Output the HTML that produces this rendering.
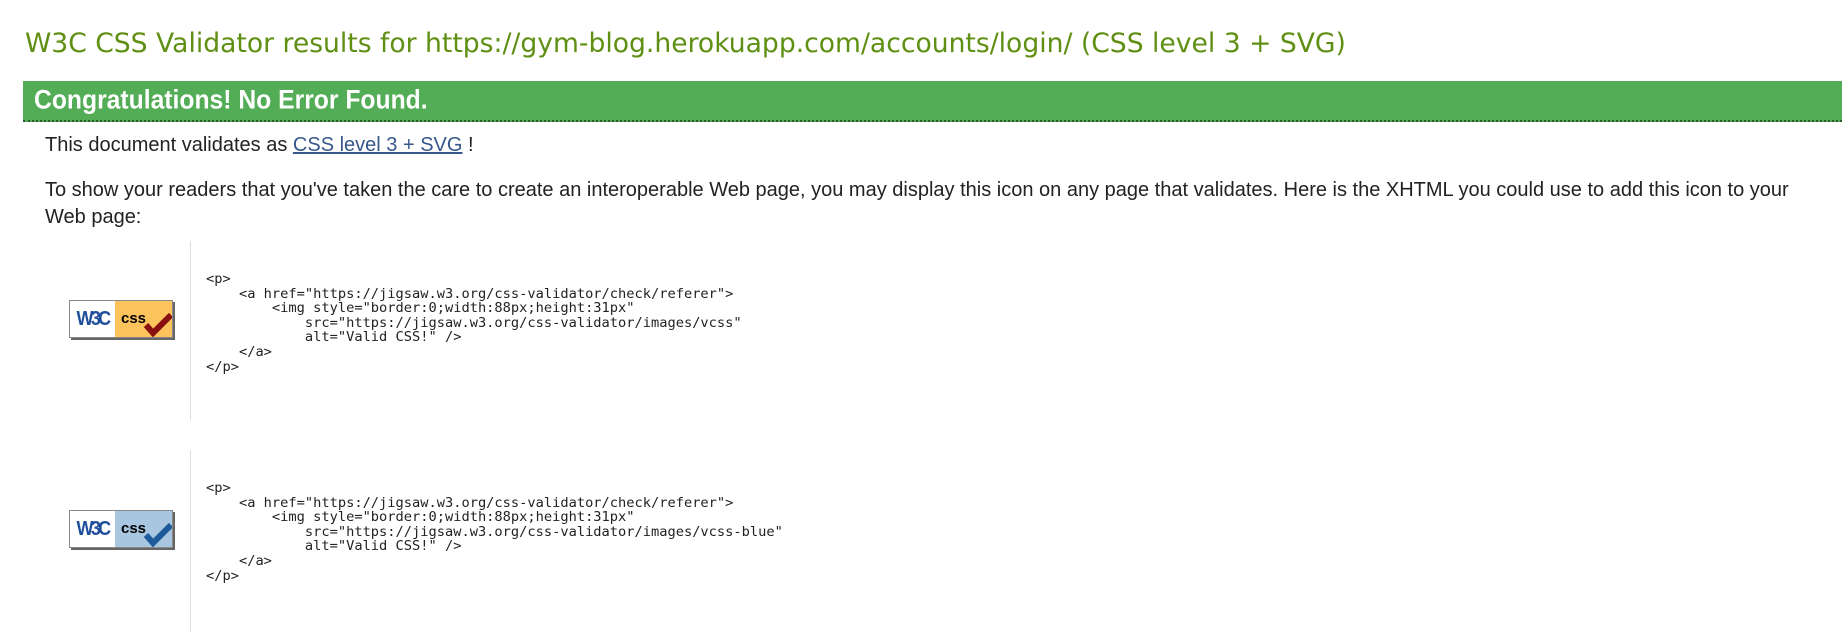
<!DOCTYPE html>
<html><head><meta charset="utf-8"><style>
body{margin:0;width:1845px;height:632px;background:#fff;position:relative;overflow:hidden;font-family:"Liberation Sans",Arial,sans-serif;}
.a{position:absolute;white-space:nowrap;}
h1{position:absolute;left:25px;top:28px;margin:0;font:normal 26.6px "DejaVu Sans",sans-serif;color:#5f8f13;white-space:nowrap;}
.bar{position:absolute;left:23px;top:81px;width:1819px;height:39px;background:#53ad56;border-bottom:2px dotted #2a5a2a;}
.bar span{position:absolute;left:11px;top:5px;color:#fff;font:bold 24.7px "Liberation Sans",Arial,sans-serif;transform:scaleY(1.08);transform-origin:top left;}
.t{font-size:20px;color:#222;}
a{color:#36578a;}
.vl{position:absolute;left:190px;width:1px;background:#ddd;}
pre{position:absolute;left:206px;margin:0;font:13.7px/14.6px "DejaVu Sans Mono",monospace;color:#222;}
.badge{position:absolute;left:69px;width:102px;height:36px;border:1px solid #888;box-shadow:2px 2px 0 #666;display:flex;overflow:hidden;}
.w3{width:45px;background:#fff;color:#1f4e9a;font:bold 20px "Liberation Sans",sans-serif;letter-spacing:-3px;display:flex;align-items:center;justify-content:center;transform:scaleX(.9);}
.cs{flex:1;position:relative;font:bold 15px "Liberation Sans",sans-serif;}
.cs span{position:absolute;left:6px;top:9px;}
</style></head><body>
<h1>W3C CSS Validator results for https://gym-blog.herokuapp.com/accounts/login/ (CSS level 3 + SVG)</h1>
<div class="bar"><span>Congratulations! No Error Found.</span></div>
<div class="a t" style="left:45px;top:134px;">This document validates as <a href="#">CSS level 3 + SVG</a> !</div>
<div class="a t" style="left:45px;top:179px;">To show your readers that you've taken the care to create an interoperable Web page, you may display this icon on any page that validates. Here is the XHTML you could use to add this icon to your</div>
<div class="a t" style="left:45px;top:206px;">Web page:</div>
<div class="vl" style="top:241px;height:179px;"></div>
<div class="vl" style="top:450px;height:182px;"></div>
<div class="badge" style="top:300px;"><div class="w3">W3C</div><div class="cs" style="background:#fdc45e;"><span>css</span><svg style="position:absolute;right:-2px;top:10px" width="30" height="26" viewBox="0 0 30 26"><path d="M2 14 L9 22 L27 4" stroke="#8a1010" stroke-width="6" fill="none"/></svg></div></div>
<div class="badge" style="top:510px;"><div class="w3">W3C</div><div class="cs" style="background:#a8c6e0;"><span>css</span><svg style="position:absolute;right:-2px;top:10px" width="30" height="26" viewBox="0 0 30 26"><path d="M2 14 L9 22 L27 4" stroke="#1d5a9a" stroke-width="6" fill="none"/></svg></div></div>
<pre style="top:272px;">&lt;p&gt;
    &lt;a href="https://jigsaw.w3.org/css-validator/check/referer"&gt;
        &lt;img style="border:0;width:88px;height:31px"
            src="https://jigsaw.w3.org/css-validator/images/vcss"
            alt="Valid CSS!" /&gt;
    &lt;/a&gt;
&lt;/p&gt;</pre>
<pre style="top:481px;">&lt;p&gt;
    &lt;a href="https://jigsaw.w3.org/css-validator/check/referer"&gt;
        &lt;img style="border:0;width:88px;height:31px"
            src="https://jigsaw.w3.org/css-validator/images/vcss-blue"
            alt="Valid CSS!" /&gt;
    &lt;/a&gt;
&lt;/p&gt;</pre>
</body></html>
